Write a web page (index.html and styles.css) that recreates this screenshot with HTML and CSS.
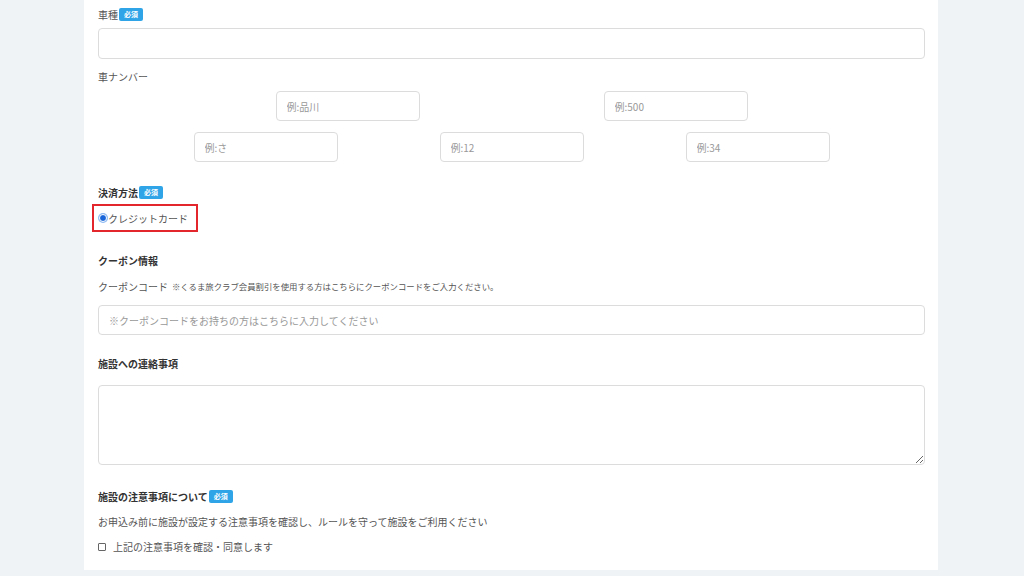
FILE: index.html
```html
<!DOCTYPE html>
<html lang="ja">
<head>
<meta charset="utf-8">
<title>予約フォーム</title>
<link rel="stylesheet" href="styles.css">
</head>
<body>
<div class="card">
  <div class="label">車種<span class="badge">必須</span></div>
  <input class="input full h31" type="text">

  <div class="label mt11">車ナンバー</div>
  <div class="plate-row row1">
    <input class="input plate" type="text" placeholder="例:品川">
    <input class="input plate" type="text" placeholder="例:500">
  </div>
  <div class="plate-row row2">
    <input class="input plate" type="text" placeholder="例:さ">
    <input class="input plate" type="text" placeholder="例:12">
    <input class="input plate" type="text" placeholder="例:34">
  </div>

  <div class="heading mt24">決済方法<span class="badge">必須</span></div>
  <div class="highlight">
    <label class="radio-label"><input class="radio" type="radio" name="pay" checked>クレジットカード</label>
  </div>

  <div class="heading mt22">クーポン情報</div>
  <div class="label mt13">クーポンコード <span class="note">※くるま旅クラブ会員割引を使用する方はこちらにクーポンコードをご入力ください。</span></div>
  <input class="input full h30 mt12" type="text" placeholder="※クーポンコードをお持ちの方はこちらに入力してください">

  <div class="heading mt22">施設への連絡事項</div>
  <textarea class="input area"></textarea>

  <div class="heading mt25">施設の注意事項について<span class="badge">必須</span></div>
  <div class="label mt12">お申込み前に施設が設定する注意事項を確認し、ルールを守って施設をご利用ください</div>
  <label class="check-row"><input class="check" type="checkbox"><span>上記の注意事項を確認・同意します</span></label>
</div>
</body>
</html>
```
FILE: styles.css
```css
* { box-sizing: border-box; }
html, body { margin: 0; padding: 0; }
body {
  background: #eff3f5;
  font-family: "Noto Sans CJK JP", "Noto Sans", sans-serif;
  color: #555;
  font-size: 10px;
  height: 576px;
  overflow: hidden;
}
.card {
  margin-left: 84px;
  width: 854px;
  background: #fff;
  padding: 8px 13px 17px 14px;
  display: flex;
  flex-direction: column;
  align-items: flex-start;
}
.label, .heading {
  line-height: 13px;
  height: 13px;
  display: flex;
  align-items: center;
  white-space: nowrap;
}
.label { color: #555; font-size: 10px; }
.heading { color: #333; font-size: 10px; font-weight: 700; }
.badge {
  display: inline-flex;
  align-items: center;
  justify-content: center;
  width: 24px;
  height: 13px;
  margin-left: 1px;
  background: #2fa4e7;
  color: #fff;
  border-radius: 2px;
  font-size: 7px;
  font-weight: 700;
}
.note { font-size: 8.4px; margin-left: 4px; color: #555; }
.input {
  border: 1px solid #dcdcdc;
  border-radius: 4px;
  background: #fff;
  font-family: inherit;
  font-size: 10px;
  color: #333;
  padding: 0 10px;
  outline: none;
}
.input::placeholder { color: #999; }
.full { width: 100%; }
.h31 { height: 31px; margin-top: 7px; }
.h30 { height: 30px; }
.plate-row {
  width: 100%;
  display: flex;
  justify-content: center;
}
.row1 { margin-top: 8px; gap: 184px; }
.row2 { margin-top: 11px; gap: 102px; }
.plate { width: 144px; height: 30px; }
.highlight {
  margin-top: 5px;
  margin-left: -6px;
  width: 106px;
  height: 28px;
  border: 2px solid #e3262b;
  display: flex;
  align-items: center;
  padding-left: 5px;
}
.radio-label { display: flex; align-items: center; color: #555; font-size: 10px; line-height: 13px; }
.radio {
  appearance: none;
  -webkit-appearance: none;
  flex: 0 0 8px;
  margin: 0 1px 0 0;
  padding: 0;
  width: 8px;
  height: 8px;
  border-radius: 50%;
  border: 1.5px solid #fff;
  background: #1a66d9;
  box-shadow: 0 0 0 1px #8dbaf2;
}
.area {
  width: 100%;
  height: 80px;
  margin-top: 15px;
  resize: vertical;
}
.check-row {
  margin-top: 12px;
  height: 13px;
  display: flex;
  align-items: center;
  color: #555;
  font-size: 10px;
}
.check {
  appearance: none;
  -webkit-appearance: none;
  flex: 0 0 8px;
  width: 8px;
  height: 8px;
  margin: 0 7px 0 0;
  padding: 0;
  border: 1px solid #666;
  border-radius: 1px;
  background: #fff;
}
.mt11 { margin-top: 11px; }
.mt12 { margin-top: 12px; }
.mt13 { margin-top: 13px; }
.mt22 { margin-top: 22px; }
.mt24 { margin-top: 24px; }
.mt25 { margin-top: 25px; }
```
